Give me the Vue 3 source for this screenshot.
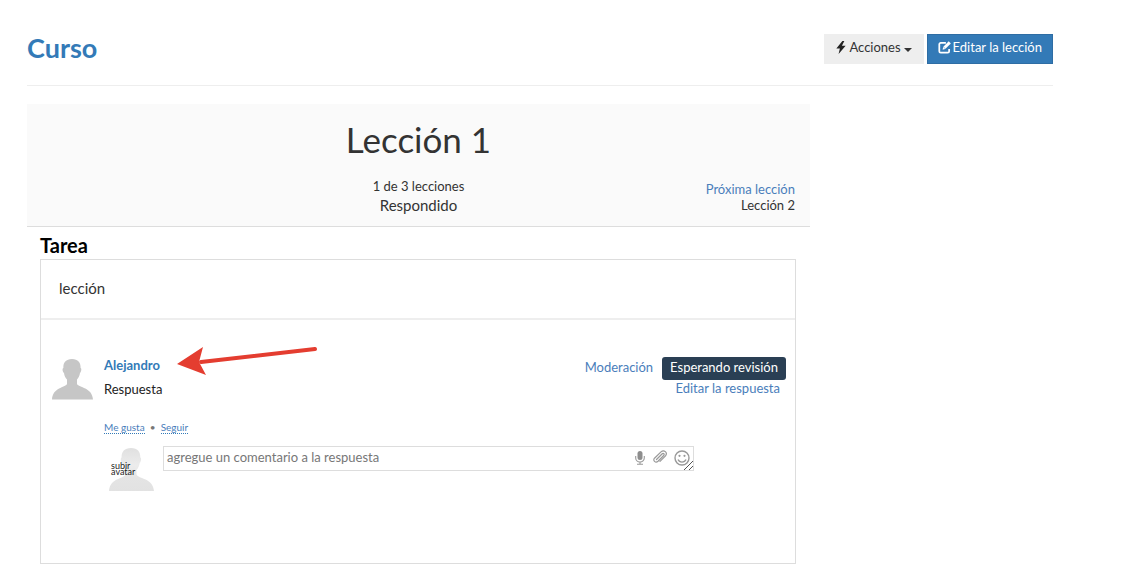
<script setup>
import { ref } from 'vue'

const comment = ref('')
</script>

<template>
  <div class="page">
    <header class="top">
      <h1><a href="#">Curso</a></h1>
      <div class="buttons">
        <button type="button" class="btn">
          <svg class="bolt" viewBox="0 0 10 14" aria-hidden="true"><path d="M6.500 0 0 8h3.800L2.400 14 10 5.200H6L8.600 0z" fill="#222" /></svg>
          <span>Acciones</span>
          <span class="caret"></span>
        </button>
        <button type="button" class="btn primary">
          <svg class="edit" viewBox="0 0 14 14" aria-hidden="true">
            <path d="M8.500 2H3a1.600 1.600 0 0 0-1.600 1.600V11A1.600 1.600 0 0 0 3 12.600h7.400A1.600 1.600 0 0 0 12 11V8.500" fill="none" stroke="#fff" stroke-width="1.900" />
            <path d="M11.600.4 13.800 2.600 7.800 8.700 5 9.300 5.500 6.500z" fill="#fff" />
            <path d="M6.300 6.800 7.600 8.100" stroke="#337ab7" stroke-width=".8" />
          </svg>
          <span>Editar la lección</span>
        </button>
      </div>
    </header>

    <main class="lesson">
      <section class="banner">
        <h2>Lección 1</h2>
        <div class="progress">
          <p>1 de 3 lecciones</p>
          <p class="state">Respondido</p>
        </div>
        <div class="next">
          <a href="#">Próxima lección</a>
          <span>Lección 2</span>
        </div>
      </section>

      <section class="task">
        <h3>Tarea</h3>
        <div class="card">
          <p class="text">lección</p>
          <article class="answer">
            <svg class="avatar" viewBox="0 0 41 41" aria-hidden="true"><path d="M20 0c6 0 8.800 3.500 8.600 9 1.300.5.700 4-.6 5-.4 3-1.600 5-3 6.500v4.500c2 4 15 3 16 15.500H0C1 28 13 29 15 25v-4.500c-1.500-1.500-2.700-3.500-3-6.500-1.500-1-2-4.500-.6-5C11 3.500 14 0 20 0z" fill="#c6c6c6" /></svg>
            <div class="body">
              <div class="row">
                <div class="said">
                  <a href="#" class="name">Alejandro</a>
                  <p>Respuesta</p>
                  <svg class="arrow" viewBox="0 0 144 32" aria-hidden="true">
                    <path d="M24 16 138 3" stroke="#e43d30" stroke-width="4" stroke-linecap="round" />
                    <path d="M0 18 26 1 22 16 29 29z" fill="#e43d30" />
                  </svg>
                </div>
                <div class="status">
                  <div class="line">
                    <a href="#">Moderación</a>
                    <span class="badge">Esperando revisión</span>
                  </div>
                  <a href="#" class="modify">Editar la respuesta</a>
                </div>
              </div>
              <div class="links">
                <a href="#">Me gusta</a><span class="dot">•</span><a href="#">Seguir</a>
              </div>
              <form class="reply" @submit.prevent>
                <a href="#" class="upload">
                  <svg viewBox="0 0 45 45" aria-hidden="true">
                    <defs><linearGradient id="fade" x1="0" y1="0" x2="0" y2="1"><stop offset="0" stop-color="#e0e0e0" /><stop offset=".4" stop-color="#ececec" /><stop offset=".7" stop-color="#e4e4e4" /><stop offset="1" stop-color="#e2e2e2" /></linearGradient></defs>
                    <path d="M22 2c6.500 0 9.500 3.800 9.300 9.500 1.400.5.800 4.500-.6 5.500-.4 3-1.700 5.500-3.200 7v4.500c2 4.500 16.500 3.500 17.500 16.500H0C1 32 14.500 33 16.500 28.500V24c-1.600-1.500-2.900-4-3.300-7-1.500-1-2-5-.6-5.500C12.400 5.800 15.500 2 22 2z" fill="url(#fade)" />
                  </svg>
                  <span>subir<br>avatar</span>
                </a>
                <div class="field">
                  <textarea v-model="comment" rows="1" aria-label="Comentario" placeholder="agregue un comentario a la respuesta"></textarea>
                  <div class="tools">
                    <button type="button" aria-label="Grabar audio">
                      <svg class="mic" viewBox="0 0 10 14"><rect x="2.500" y="0" width="5" height="9" rx="2.500" fill="#8d8d8d" /><path d="M.7 5v2a4.300 4 0 0 0 8.600 0V5M5 11v2M2 13.300h6" fill="none" stroke="#999" stroke-width="1.100" /></svg>
                    </button>
                    <button type="button" aria-label="Adjuntar archivo">
                      <svg class="clip" viewBox="0 0 14 14"><path d="M3.500 9.500 9 4c1.400-1.400 3 .2 1.700 1.500L5 11.200C2.600 13.400-.6 10.500 1.500 8.200L8 1.900c3-2.700 7 .7 4.500 4L7 11.400" fill="none" stroke="#999" stroke-width="1.200" stroke-linecap="round" /></svg>
                    </button>
                    <button type="button" aria-label="Insertar emoticono">
                      <svg class="smile" viewBox="0 0 16 16"><circle cx="8" cy="8" r="7" fill="none" stroke="#999" stroke-width="1.400" /><circle cx="5.500" cy="5.800" r="1.100" fill="#999" /><circle cx="10.500" cy="5.800" r="1.100" fill="#999" /><path d="M4 9.500c1.500 3.400 6.500 3.400 8 0" fill="none" stroke="#999" stroke-width="1.300" /></svg>
                    </button>
                  </div>
                  <svg class="grip" viewBox="0 0 9 9" aria-hidden="true"><path d="M0 9 9 0M5 9 9 5" stroke="#555" stroke-width="1" /></svg>
                </div>
              </form>
            </div>
          </article>
        </div>
      </section>
    </main>
  </div>
</template>

<style>
body {
  margin: 0;
  background: #fff;
}
</style>

<style scoped>
.page {
  padding: 34px 83px 2px 27px;
  font: 13px/16px Lato, "Open Sans", sans-serif;
  color: #333;
}
h1, h2, h3, p {
  margin: 0;
}
a {
  color: #4a7ebb;
  text-decoration: none;
}
.top {
  display: flex;
  justify-content: space-between;
  align-items: flex-start;
  padding-bottom: 21px;
  border-bottom: 1px solid #eee;
}
h1 {
  font-size: 27px;
  line-height: 28px;
  font-weight: 700;
}
h1 a {
  color: #337ab7;
}
.buttons {
  display: flex;
  gap: 3px;
}
.btn {
  display: flex;
  align-items: center;
  gap: 3px;
  height: 30px;
  padding: 0 11px 4px;
  border: 1px solid #eee;
  background: #eee;
  color: #333;
  font: inherit;
}
.primary {
  gap: 2px;
  padding: 0 10px 4px;
  border-color: #2e6da4;
  background: #337ab7;
  color: #fff;
}
.bolt {
  width: 10px;
  height: 13px;
}
.edit {
  width: 13px;
  height: 13px;
}
.caret {
  margin-top: 5px;
  border: 4px solid transparent;
  border-top-color: #333;
  border-bottom: 0;
}
.lesson {
  margin: 18px 243px 0 0;
}
.banner {
  position: relative;
  padding: 16px 15px 11px;
  border-bottom: 1px solid #ddd;
  background: #fafafa;
  text-align: center;
}
h2 {
  font-size: 35px;
  line-height: 38px;
  font-weight: 400;
}
.progress {
  margin-top: 20px;
}
.state {
  font-size: 15px;
  line-height: 20px;
}
.progress p:last-child {
  margin-top: 1px;
}
.next {
  position: absolute;
  right: 15px;
  bottom: 13px;
  display: flex;
  flex-direction: column;
  align-items: flex-end;
}
.task {
  padding: 7px 14px 0 13px;
}
h3 {
  margin-bottom: 3px;
  color: #000;
  font-size: 20px;
  line-height: 22px;
}
.card {
  border: 1px solid #ddd;
}
.text {
  padding: 18px 18px 20px;
  border-bottom: 2px solid #eee;
  font-size: 15px;
  line-height: 20px;
}
.answer {
  display: flex;
  gap: 11px;
  padding: 37px 9px 72px 11px;
}
.avatar {
  flex: none;
  width: 41px;
  height: 41px;
  margin-top: 2px;
}
.body {
  flex: 1;
}
.row {
  display: flex;
  justify-content: space-between;
}
.said {
  position: relative;
}
.name {
  display: block;
  color: #337ab7;
  font-weight: 700;
  line-height: 16px;
}
.said p {
  margin-top: 8px;
  color: #222;
}
.arrow {
  position: absolute;
  left: 73px;
  top: -11px;
  width: 144px;
  height: 32px;
}
.status {
  text-align: right;
}
.line {
  display: flex;
  align-items: flex-start;
  gap: 9px;
}
.line a {
  padding-top: 2px;
}
.badge {
  padding: 2px 8px 5px;
  border-radius: 3px;
  background: #2a3f54;
  color: #fff;
}
.modify {
  display: block;
  margin: 0 6px 0 0;
}
.links {
  display: flex;
  margin-top: 24px;
  font-size: 10px;
  line-height: 12px;
}
.links a {
  border-bottom: 1px dotted #337ab7;
}
.dot {
  width: 16px;
  color: #777;
  text-align: center;
}
.reply {
  display: flex;
  align-items: flex-start;
  gap: 9px;
  margin: 12px 92px 0 5px;
}
.upload {
  position: relative;
  flex: none;
  width: 45px;
  height: 45px;
}
.upload svg {
  display: block;
  width: 45px;
  height: 45px;
}
.upload span {
  position: absolute;
  left: 2px;
  top: 17px;
  color: #222;
  font-size: 9px;
  line-height: 6px;
}
.field {
  position: relative;
  flex: 1;
}
textarea {
  display: block;
  box-sizing: border-box;
  width: 100%;
  height: 25px;
  padding: 2px 70px 4px 3px;
  border: 1px solid #ddd;
  border-radius: 0;
  background: #fff;
  color: #333;
  font: inherit;
  resize: none;
  overflow: hidden;
}
textarea::placeholder {
  color: #777;
}
.tools {
  position: absolute;
  right: 4px;
  top: 4px;
  display: flex;
  align-items: flex-start;
  gap: 7px;
}
.tools button {
  display: block;
  padding: 0;
  border: 0;
  background: none;
}
.tools svg {
  display: block;
  height: 14px;
}
.tools .mic {
  width: 12px;
  margin-top: 1px;
}
.tools .clip {
  width: 14px;
}
.tools .smile {
  width: 16px;
  height: 16px;
}
.grip {
  position: absolute;
  right: 1px;
  bottom: 1px;
  width: 9px;
  height: 9px;
  pointer-events: none;
}
</style>
